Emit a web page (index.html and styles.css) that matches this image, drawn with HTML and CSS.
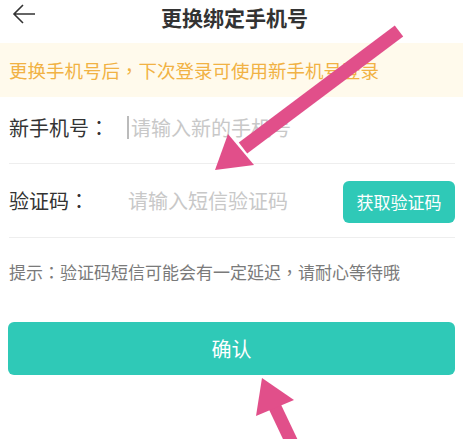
FILE: index.html
```html
<!DOCTYPE html>
<html lang="zh-CN">
<head>
  <meta charset="UTF-8">
  <meta name="viewport" content="width=device-width, initial-scale=1.0">
  <title>更换绑定手机号</title>
  <link rel="stylesheet" href="styles.css">
</head>
<body>
  <div class="page">
    <header class="nav">
      <a class="back" href="#">
        <svg width="24" height="24" viewBox="0 0 24 24">
          <path d="M11 3 L2 12 L11 21 M2 12 H23" fill="none" stroke="#333" stroke-width="1.6"/>
        </svg>
      </a>
      <h1>更换绑定手机号</h1>
    </header>

    <div class="notice">更换手机号后<span class="punct" lang="zh-TW">，</span>下次登录可使用新手机号登录</div>

    <div class="form">
      <div class="row">
        <label>新手机号<span class="punct" lang="zh-TW">：</span></label>
        <span class="caret"></span>
        <input type="tel" placeholder="请输入新的手机号">
      </div>
      <div class="row">
        <label>验证码<span class="punct" lang="zh-TW">：</span></label>
        <input type="text" placeholder="请输入短信验证码">
        <button class="code-btn">获取验证码</button>
      </div>
    </div>

    <p class="tip">提示<span class="punct" lang="zh-TW">：</span>验证码短信可能会有一定延迟<span class="punct" lang="zh-TW">，</span>请耐心等待哦</p>

    <button class="confirm">确认</button>

    <!-- annotation arrows drawn over the page -->
    <svg class="marks" width="469" height="439" viewBox="0 0 469 439">
      <line x1="399" y1="31" x2="243" y2="148" stroke="#e14f8a" stroke-width="14"/>
      <polygon points="215,170 228,134 254,165" fill="#e14f8a"/>
      <line x1="274" y1="405" x2="293" y2="445" stroke="#e14f8a" stroke-width="13"/>
      <polygon points="262,378 256,416 294,400" fill="#e14f8a"/>
    </svg>
  </div>
</body>
</html>
```

FILE: styles.css
```css
*, *::before, *::after {
  margin: 0;
  padding: 0;
  box-sizing: border-box;
}

body {
  font-family: "Noto Sans CJK SC", "Noto Sans", sans-serif;
  background: #fff;
  color: #333;
}

/* centred full-width punctuation */
.punct {
  font-family: "Noto Sans CJK TC", sans-serif;
}

.page {
  position: relative;
  width: 469px;
  height: 439px;
  overflow: hidden;
}

.nav {
  height: 43px;
  display: flex;
  align-items: center;
  justify-content: center;
  position: relative;
}

.nav h1 {
  font-size: 21px;
  font-weight: bold;
  color: #333;
  line-height: 30px;
  margin-top: -10px;
}

.back {
  position: absolute;
  left: 12px;
  top: 2px;
  display: flex;
}

.notice {
  height: 54px;
  width: 463px;
  background: #fffaec;
  color: #f1b244;
  font-size: 18.5px;
  display: flex;
  align-items: center;
  padding-left: 9px;
}

.form {
  margin: 0 14px 0 9px;
}

.row {
  display: flex;
  align-items: center;
  border-bottom: 1px solid #eee;
}

.row:first-child {
  height: 67px;
  padding-bottom: 6px;
}

.row:last-child {
  height: 74px;
}

.row label {
  width: 118px;
  font-size: 20px;
  color: #333;
  flex-shrink: 0;
}

.caret {
  width: 2px;
  height: 23px;
  background: #bbb;
  margin-right: 1px;
}

.row input {
  flex: 1;
  min-width: 0;
  border: none;
  outline: none;
  font-family: inherit;
  font-size: 20px;
  color: #333;
  background: transparent;
  padding-left: 1px;
}

.row input::placeholder {
  color: #c8c8c8;
}

.code-btn {
  width: 112px;
  height: 42px;
  border: none;
  border-radius: 6px;
  background: #2fc9b7;
  color: #fff;
  font-family: inherit;
  font-size: 17px;
  margin-top: 2px;
}

.tip {
  margin: 22px 0 0 9px;
  font-size: 17px;
  line-height: 24px;
  color: #7a7a7a;
}

.confirm {
  display: block;
  width: 447px;
  height: 53px;
  margin: 38px 0 0 8px;
  border: none;
  border-radius: 6px;
  background: #2fc9b7;
  color: #fff;
  font-family: inherit;
  font-size: 20px;
}

.marks {
  position: absolute;
  left: 0;
  top: 0;
  pointer-events: none;
}
```
